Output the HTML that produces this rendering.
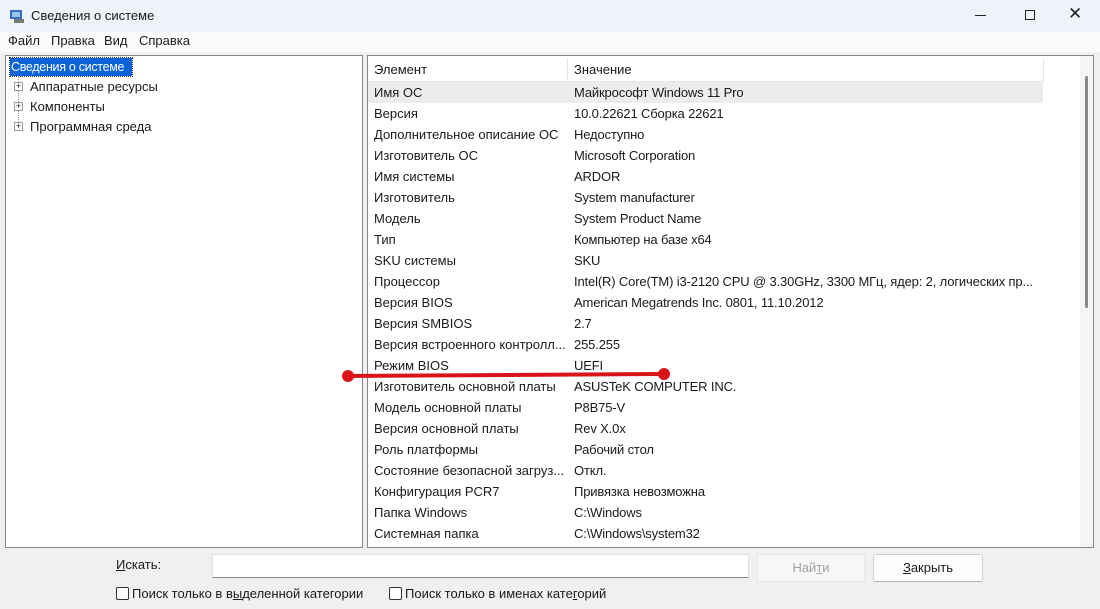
<!DOCTYPE html>
<html><head><meta charset="utf-8"><style>
*{margin:0;padding:0;box-sizing:border-box}
body{width:1100px;height:609px;overflow:hidden;background:#f0f0f0;font-family:"Segoe UI","Liberation Sans","DejaVu Sans",sans-serif;font-size:13px;color:#1a1a1a;position:relative}
.abs{position:absolute;white-space:nowrap}
#title{left:0;top:0;width:1100px;height:32px;background:#eef3f9}
#menu{left:0;top:32px;width:1100px;height:20px;background:#fbfbfb}
.panel{background:#fff;border:1px solid #828790}
.row{position:absolute;left:0;height:21px;line-height:21px;width:675px}
.row span{position:absolute}
.c1{left:6px}.c2{left:206px;letter-spacing:-0.15px}
</style></head><body>
<div id="title" class="abs"></div>
<svg class="abs" style="left:9px;top:8px" width="16" height="16"><rect x="1" y="2" width="12" height="9" fill="#3a6fc4"/><rect x="3" y="4" width="8" height="5" fill="#9cc3ee"/><rect x="5" y="11" width="10" height="4" fill="#777"/></svg>
<div class="abs" style="left:31px;top:8px">Сведения о системе</div>
<div class="abs" style="left:975px;top:15px;width:11px;height:1px;background:#222"></div>
<div class="abs" style="left:1025px;top:10px;width:10px;height:10px;border:1px solid #222"></div>
<div class="abs" style="left:1068px;top:4px;font-size:17px;color:#222">✕</div>
<div id="menu" class="abs"></div>
<div class="abs" style="left:8px;top:33px">Файл</div>
<div class="abs" style="left:51px;top:33px">Правка</div>
<div class="abs" style="left:104px;top:33px">Вид</div>
<div class="abs" style="left:139px;top:33px">Справка</div>

<div class="abs panel" style="left:5px;top:55px;width:358px;height:493px"></div>
<div class="abs" style="left:10px;top:58px;height:18px;width:122px;background:#0a64d8;color:#fff;line-height:18px;padding-left:1px;outline:1px dotted #333;font-size:12.5px;letter-spacing:-0.3px;overflow:hidden">Сведения о системе</div>
<div class="abs" style="left:18px;top:76px;width:1px;height:52px;border-left:1px dotted #999"></div>
<div class="abs" style="left:14px;top:82px;width:9px;height:9px;border:1px solid #999;background:#fff;font-size:9px;line-height:7px;text-align:center">+</div>
<div class="abs" style="left:14px;top:102px;width:9px;height:9px;border:1px solid #999;background:#fff;font-size:9px;line-height:7px;text-align:center">+</div>
<div class="abs" style="left:14px;top:122px;width:9px;height:9px;border:1px solid #999;background:#fff;font-size:9px;line-height:7px;text-align:center">+</div>
<div class="abs" style="left:30px;top:79px">Аппаратные ресурсы</div>
<div class="abs" style="left:30px;top:99px">Компоненты</div>
<div class="abs" style="left:30px;top:119px">Программная среда</div>

<div class="abs panel" style="left:367px;top:55px;width:727px;height:493px;overflow:hidden">
 <div class="abs" style="left:0;top:2px;width:675px;height:24px;background:#fff;border-bottom:1px solid #e5e5e5"></div>
 <div class="abs" style="left:199px;top:2px;width:1px;height:24px;background:#e5e5e5"></div>
 <div class="abs" style="left:675px;top:2px;width:1px;height:24px;background:#e5e5e5"></div>
 <div class="abs" style="left:6px;top:6px">Элемент</div>
 <div class="abs" style="left:206px;top:6px">Значение</div>
 <div class="abs" style="left:0;top:26px;width:675px;height:21px;background:#ececec"></div>
 <div class="abs" style="left:712px;top:0;width:14px;height:493px;background:#f5f5f5"></div>
 <div class="abs" style="left:717px;top:20px;width:3px;height:232px;background:#8a8a8a;border-radius:2px"></div>
 <div style="position:absolute;left:0;top:26px">
  <div class="row" style="top:0"><span class="c1">Имя ОС</span><span class="c2">Майкрософт Windows 11 Pro</span></div>
  <div class="row" style="top:21px"><span class="c1">Версия</span><span class="c2">10.0.22621 Сборка 22621</span></div>
  <div class="row" style="top:42px"><span class="c1">Дополнительное описание ОС</span><span class="c2">Недоступно</span></div>
  <div class="row" style="top:63px"><span class="c1">Изготовитель ОС</span><span class="c2">Microsoft Corporation</span></div>
  <div class="row" style="top:84px"><span class="c1">Имя системы</span><span class="c2">ARDOR</span></div>
  <div class="row" style="top:105px"><span class="c1">Изготовитель</span><span class="c2">System manufacturer</span></div>
  <div class="row" style="top:126px"><span class="c1">Модель</span><span class="c2">System Product Name</span></div>
  <div class="row" style="top:147px"><span class="c1">Тип</span><span class="c2">Компьютер на базе x64</span></div>
  <div class="row" style="top:168px"><span class="c1">SKU системы</span><span class="c2">SKU</span></div>
  <div class="row" style="top:189px"><span class="c1">Процессор</span><span class="c2">Intel(R) Core(TM) i3-2120 CPU @ 3.30GHz, 3300 МГц, ядер: 2, логических пр...</span></div>
  <div class="row" style="top:210px"><span class="c1">Версия BIOS</span><span class="c2">American Megatrends Inc. 0801, 11.10.2012</span></div>
  <div class="row" style="top:231px"><span class="c1">Версия SMBIOS</span><span class="c2">2.7</span></div>
  <div class="row" style="top:252px"><span class="c1">Версия встроенного контролл...</span><span class="c2">255.255</span></div>
  <div class="row" style="top:273px"><span class="c1">Режим BIOS</span><span class="c2">UEFI</span></div>
  <div class="row" style="top:294px"><span class="c1">Изготовитель основной платы</span><span class="c2">ASUSTeK COMPUTER INC.</span></div>
  <div class="row" style="top:315px"><span class="c1">Модель основной платы</span><span class="c2">P8B75-V</span></div>
  <div class="row" style="top:336px"><span class="c1">Версия основной платы</span><span class="c2">Rev X.0x</span></div>
  <div class="row" style="top:357px"><span class="c1">Роль платформы</span><span class="c2">Рабочий стол</span></div>
  <div class="row" style="top:378px"><span class="c1">Состояние безопасной загруз...</span><span class="c2">Откл.</span></div>
  <div class="row" style="top:399px"><span class="c1">Конфигурация PCR7</span><span class="c2">Привязка невозможна</span></div>
  <div class="row" style="top:420px"><span class="c1">Папка Windows</span><span class="c2">C:\Windows</span></div>
  <div class="row" style="top:441px"><span class="c1">Системная папка</span><span class="c2">C:\Windows\system32</span></div>
 </div>
</div>

<svg class="abs" style="left:0;top:0" width="1100" height="609"><line x1="348" y1="376" x2="664" y2="374" stroke="#d8141a" stroke-width="4" stroke-linecap="round"/><circle cx="348" cy="376" r="6" fill="#d8141a"/><circle cx="664" cy="374" r="6" fill="#d8141a"/></svg>

<div class="abs" style="left:116px;top:557px"><u>И</u>скать:</div>
<div class="abs" style="left:212px;top:554px;width:537px;height:24px;background:#fff;border:1px solid #e0e0e0;border-bottom:1px solid #888"></div>
<div class="abs" style="left:757px;top:554px;width:108px;height:28px;background:#f7f7f7;border:1px solid #e8e8e8;color:#a0a0a0;text-align:center;line-height:26px">Най<u>т</u>и</div>
<div class="abs" style="left:873px;top:554px;width:110px;height:28px;background:#fdfdfd;border:1px solid #d0d0d0;border-bottom-color:#b0b0b0;text-align:center;line-height:26px;border-radius:3px"><u>З</u>акрыть</div>
<div class="abs" style="left:116px;top:587px;width:13px;height:13px;border:1px solid #333;border-radius:2px;background:#fff"></div>
<div class="abs" style="left:132px;top:586px">Поиск только в в<u>ы</u>деленной категории</div>
<div class="abs" style="left:389px;top:587px;width:13px;height:13px;border:1px solid #333;border-radius:2px;background:#fff"></div>
<div class="abs" style="left:405px;top:586px">Поиск только в именах кате<u>г</u>орий</div>
</body></html>
